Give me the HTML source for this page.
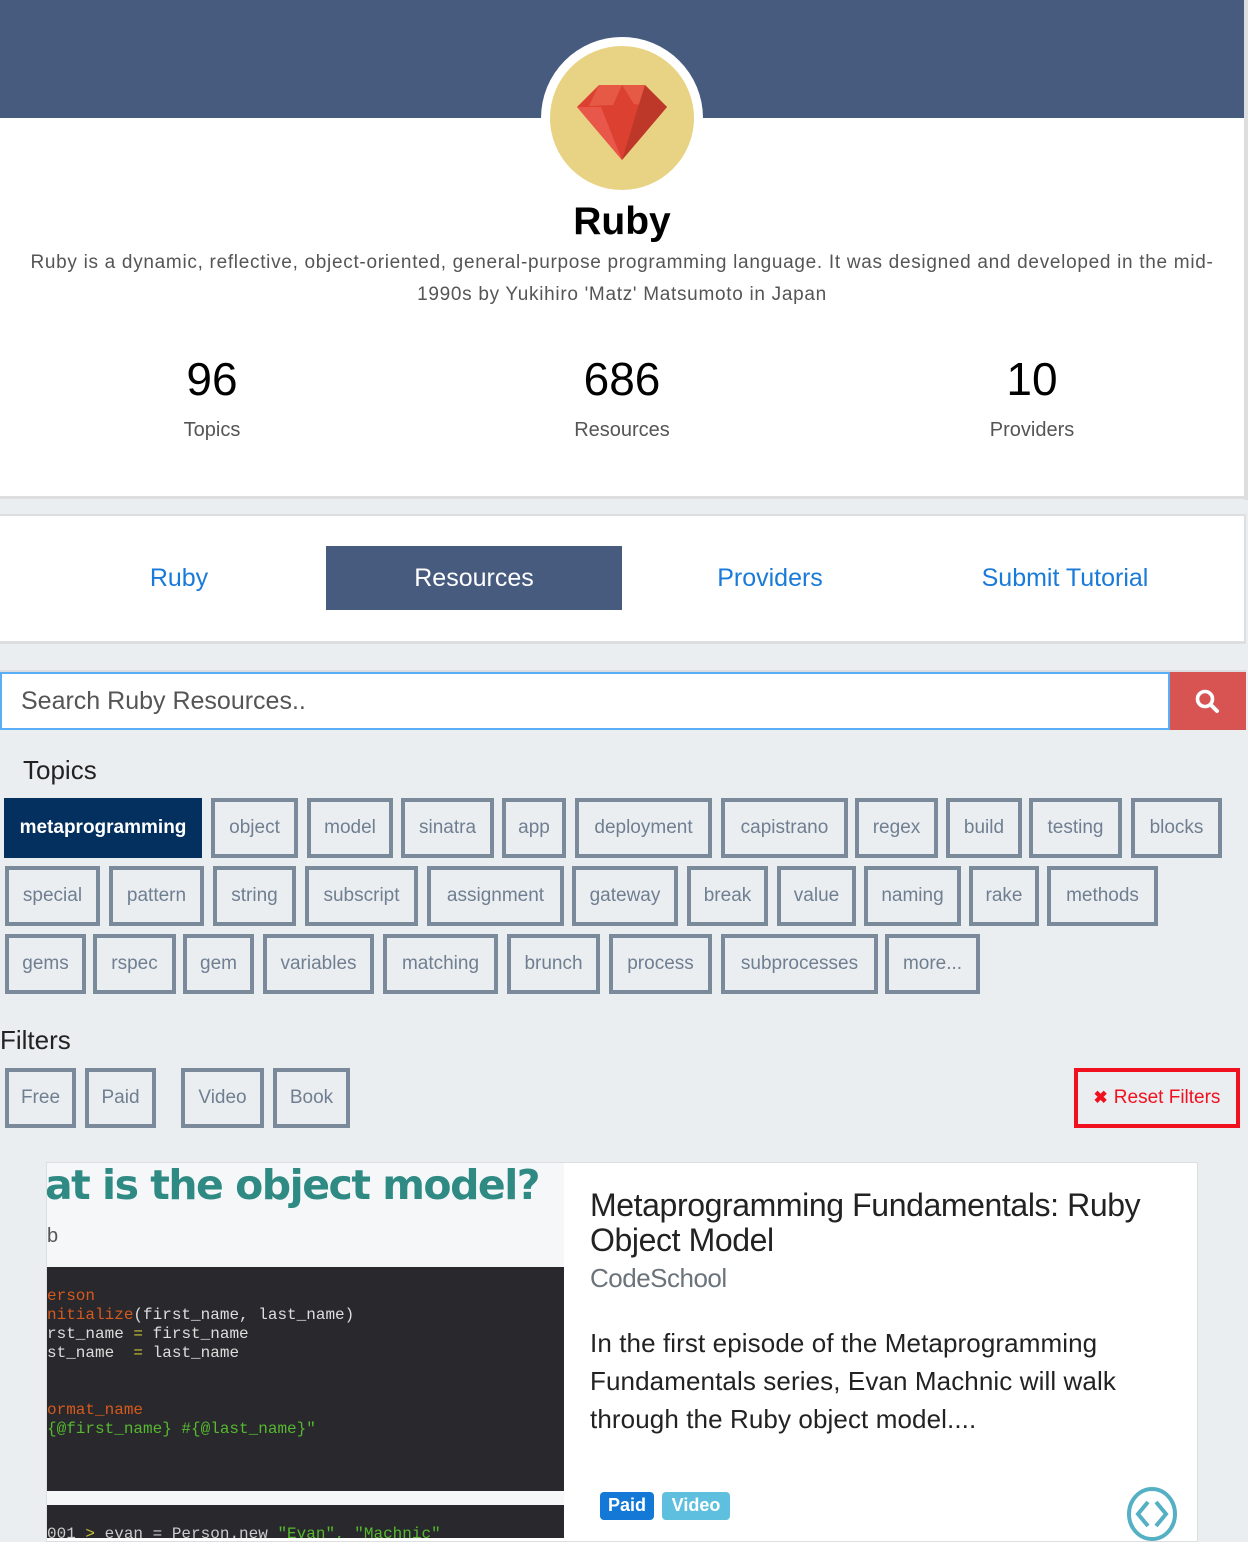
<!DOCTYPE html>
<html><head><meta charset="utf-8"><style>
*{box-sizing:border-box;margin:0;padding:0}
body{width:1248px;height:1538px;background:#ebeef1;font-family:"Liberation Sans",sans-serif;position:relative;overflow:hidden}
.a{position:absolute}
.tag{position:absolute;height:60px;border:4px solid #7b8a9a;color:#6f7f91;font-size:19px;display:flex;align-items:center;justify-content:center;white-space:nowrap}
.nav{position:absolute;top:546px;height:64px;display:flex;align-items:center;justify-content:center;font-size:25px;color:#1a7ad9}
</style></head><body>
<div class="a" style="left:0;top:0;width:1244px;height:118px;background:#475b7f"></div>
<div class="a" style="left:0;top:118px;width:1244px;height:381px;background:#fff;border-bottom:3px solid #dcdee0"></div>
<div class="a" style="left:1244px;top:0;width:4px;height:500px;background:#dcdee0"></div>
<div class="a" style="left:541px;top:37px;width:162px;height:162px;border-radius:50%;background:#fff"></div>
<div class="a" style="left:550px;top:46px;width:144px;height:144px;border-radius:50%;background:#e8d384"></div>
<svg class="a" style="left:577px;top:84px" width="90" height="76" viewBox="0 0 90 76">
<polygon points="0,23 22,1 68,1 90,23 45,76" fill="#dc4030"/>
<polygon points="22,1 45,1 36,21 12,22" fill="#e65a45"/>
<polygon points="45,1 68,1 78,22 57,20" fill="#e65a45"/>
<polygon points="68,1 90,23 45,76 62,20" fill="#bd3829"/>
<polygon points="0,23 24,23 45,76" fill="#e8574a"/>
</svg>
<div class="a" style="left:0;top:200px;width:1244px;text-align:center;font-size:39px;font-weight:bold;color:#000">Ruby</div>
<div class="a" style="left:0;top:247px;width:1244px;text-align:center;font-size:19px;letter-spacing:0.7px;line-height:32px;color:#555;white-space:nowrap">Ruby is a dynamic, reflective, object-oriented, general-purpose programming language. It was designed and developed in the mid-<br>1990s by Yukihiro 'Matz' Matsumoto in Japan</div>
<div class="a" style="left:112px;top:352px;width:200px;text-align:center;font-size:46px;color:#000">96</div>
<div class="a" style="left:522px;top:352px;width:200px;text-align:center;font-size:46px;color:#000">686</div>
<div class="a" style="left:932px;top:352px;width:200px;text-align:center;font-size:46px;color:#000">10</div>
<div class="a" style="left:112px;top:419px;width:200px;text-align:center;font-size:20px;color:#555">Topics</div>
<div class="a" style="left:522px;top:419px;width:200px;text-align:center;font-size:20px;color:#555">Resources</div>
<div class="a" style="left:932px;top:419px;width:200px;text-align:center;font-size:20px;color:#555">Providers</div>

<div class="a" style="left:0;top:514px;width:1246px;height:130px;background:#fff;border-top:2px solid #dcdee0;border-bottom:3px solid #dcdee0;border-right:2px solid #dcdee0"></div>
<div class="nav" style="left:31px;width:296px">Ruby</div>
<div class="nav" style="left:326px;width:296px;background:#475b7f;color:#fff">Resources</div>
<div class="nav" style="left:622px;width:296px">Providers</div>
<div class="nav" style="left:917px;width:296px">Submit Tutorial</div>

<div class="a" style="left:0;top:670px;width:1246px;height:3px;background:#dcdee0"></div>
<div class="a" style="left:0;top:672px;width:1170px;height:58px;background:#fff;border:2px solid #5aaef5;font-size:25px;color:#555;padding-left:19px;line-height:54px">Search Ruby Resources..</div>
<div class="a" style="left:1170px;top:672px;width:76px;height:58px;background:#d75453"></div>
<svg class="a" style="left:1194px;top:688px" width="28" height="28" viewBox="0 0 28 28"><circle cx="11" cy="11" r="7.5" fill="none" stroke="#fff" stroke-width="3.6"/><line x1="16.5" y1="16.5" x2="23" y2="23" stroke="#fff" stroke-width="4" stroke-linecap="round"/></svg>

<div class="a" style="left:23px;top:755px;font-size:26px;color:#222">Topics</div>
<div class="tag" style="left:4px;top:798px;width:198px;background:#03305f;border-color:#03305f;color:#fff;font-weight:bold">metaprogramming</div>
<div class="tag" style="left:211px;top:798px;width:87px">object</div>
<div class="tag" style="left:307px;top:798px;width:86px">model</div>
<div class="tag" style="left:401px;top:798px;width:93px">sinatra</div>
<div class="tag" style="left:502px;top:798px;width:64px">app</div>
<div class="tag" style="left:575px;top:798px;width:137px">deployment</div>
<div class="tag" style="left:721px;top:798px;width:127px">capistrano</div>
<div class="tag" style="left:855px;top:798px;width:83px">regex</div>
<div class="tag" style="left:946px;top:798px;width:76px">build</div>
<div class="tag" style="left:1029px;top:798px;width:93px">testing</div>
<div class="tag" style="left:1131px;top:798px;width:91px">blocks</div>

<div class="tag" style="left:5px;top:866px;width:95px">special</div>
<div class="tag" style="left:109px;top:866px;width:95px">pattern</div>
<div class="tag" style="left:213px;top:866px;width:83px">string</div>
<div class="tag" style="left:305px;top:866px;width:113px">subscript</div>
<div class="tag" style="left:427px;top:866px;width:137px">assignment</div>
<div class="tag" style="left:572px;top:866px;width:106px">gateway</div>
<div class="tag" style="left:687px;top:866px;width:81px">break</div>
<div class="tag" style="left:777px;top:866px;width:79px">value</div>
<div class="tag" style="left:864px;top:866px;width:97px">naming</div>
<div class="tag" style="left:969px;top:866px;width:70px">rake</div>
<div class="tag" style="left:1047px;top:866px;width:111px">methods</div>

<div class="tag" style="left:5px;top:934px;width:81px">gems</div>
<div class="tag" style="left:93px;top:934px;width:83px">rspec</div>
<div class="tag" style="left:183px;top:934px;width:71px">gem</div>
<div class="tag" style="left:263px;top:934px;width:111px">variables</div>
<div class="tag" style="left:383px;top:934px;width:115px">matching</div>
<div class="tag" style="left:507px;top:934px;width:93px">brunch</div>
<div class="tag" style="left:609px;top:934px;width:103px">process</div>
<div class="tag" style="left:721px;top:934px;width:157px">subprocesses</div>
<div class="tag" style="left:885px;top:934px;width:95px">more...</div>

<div class="a" style="left:0;top:1025px;font-size:26px;color:#222">Filters</div>
<div class="tag" style="left:5px;top:1068px;width:71px">Free</div>
<div class="tag" style="left:85px;top:1068px;width:71px">Paid</div>
<div class="tag" style="left:181px;top:1068px;width:83px">Video</div>
<div class="tag" style="left:273px;top:1068px;width:77px">Book</div>
<div class="tag" style="left:1074px;top:1068px;width:166px;border-color:#f0101e;color:#f0101e"><span style="font-weight:bold;font-size:17px;margin-right:6px">✖</span>Reset Filters</div>

<div class="a" style="left:46px;top:1162px;width:1152px;height:380px;background:#fff;border:1px solid #dcdee0"></div>
<div class="a" style="left:47px;top:1163px;width:517px;height:375px;background:#f6f7f9;overflow:hidden">
<div class="a" style="left:-2px;top:-2px;font-size:41px;font-weight:bold;color:#2f8a84;white-space:nowrap;font-family:'DejaVu Sans',sans-serif;letter-spacing:-1.5px">at is the object model?</div>
<div class="a" style="left:0;top:62px;font-size:20px;color:#555">b</div>
<div class="a" style="left:0;top:104px;width:517px;height:224px;background:#29282c;font-family:'Liberation Mono',monospace;font-size:16px;line-height:19px;color:#ddd;padding-top:20px;white-space:pre"><span style="color:#d55a1e">erson</span>
<span style="color:#d55a1e">nitialize</span>(first_name, last_name)
rst_name <span style="color:#c8c23a">=</span> first_name
st_name  <span style="color:#c8c23a">=</span> last_name


<span style="color:#d55a1e">ormat_name</span>
<span style="color:#55b830">{@first_name} #{@last_name}"</span></div>
<div class="a" style="left:0;top:342px;width:517px;height:40px;background:#29282c;font-family:'Liberation Mono',monospace;font-size:16px;color:#ccc;padding-top:20px;white-space:pre">001 <span style="color:#c8c23a">&gt;</span> evan = Person.new <span style="color:#55b830">"Evan", "Machnic"</span></div>
</div>
<div class="a" style="left:590px;top:1188px;width:590px;font-size:32px;line-height:35px;color:#222;letter-spacing:-0.4px">Metaprogramming Fundamentals: Ruby Object Model</div>
<div class="a" style="left:590px;top:1263px;font-size:26px;color:#6b737b;letter-spacing:-0.5px">CodeSchool</div>
<div class="a" style="left:590px;top:1324px;width:590px;font-size:26px;line-height:38px;color:#222;letter-spacing:0.1px">In the first episode of the Metaprogramming Fundamentals series, Evan Machnic will walk through the Ruby object model....</div>
<div class="a" style="left:600px;top:1492px;width:54px;height:28px;background:#1378d6;border-radius:4px;color:#fff;font-weight:bold;font-size:18px;text-align:center;line-height:26px">Paid</div>
<div class="a" style="left:662px;top:1492px;width:68px;height:28px;background:#5ec0de;border-radius:4px;color:#fff;font-weight:bold;font-size:18px;text-align:center;line-height:26px">Video</div>
<svg class="a" style="left:1124px;top:1486px" width="56" height="56" viewBox="0 0 56 56"><ellipse cx="28" cy="28" rx="23" ry="25" fill="none" stroke="#56b0c4" stroke-width="4"/><polyline points="24,16 14,28 24,40" fill="none" stroke="#56b0c4" stroke-width="4"/><polyline points="32,16 42,28 32,40" fill="none" stroke="#56b0c4" stroke-width="4"/></svg>
</body></html>
